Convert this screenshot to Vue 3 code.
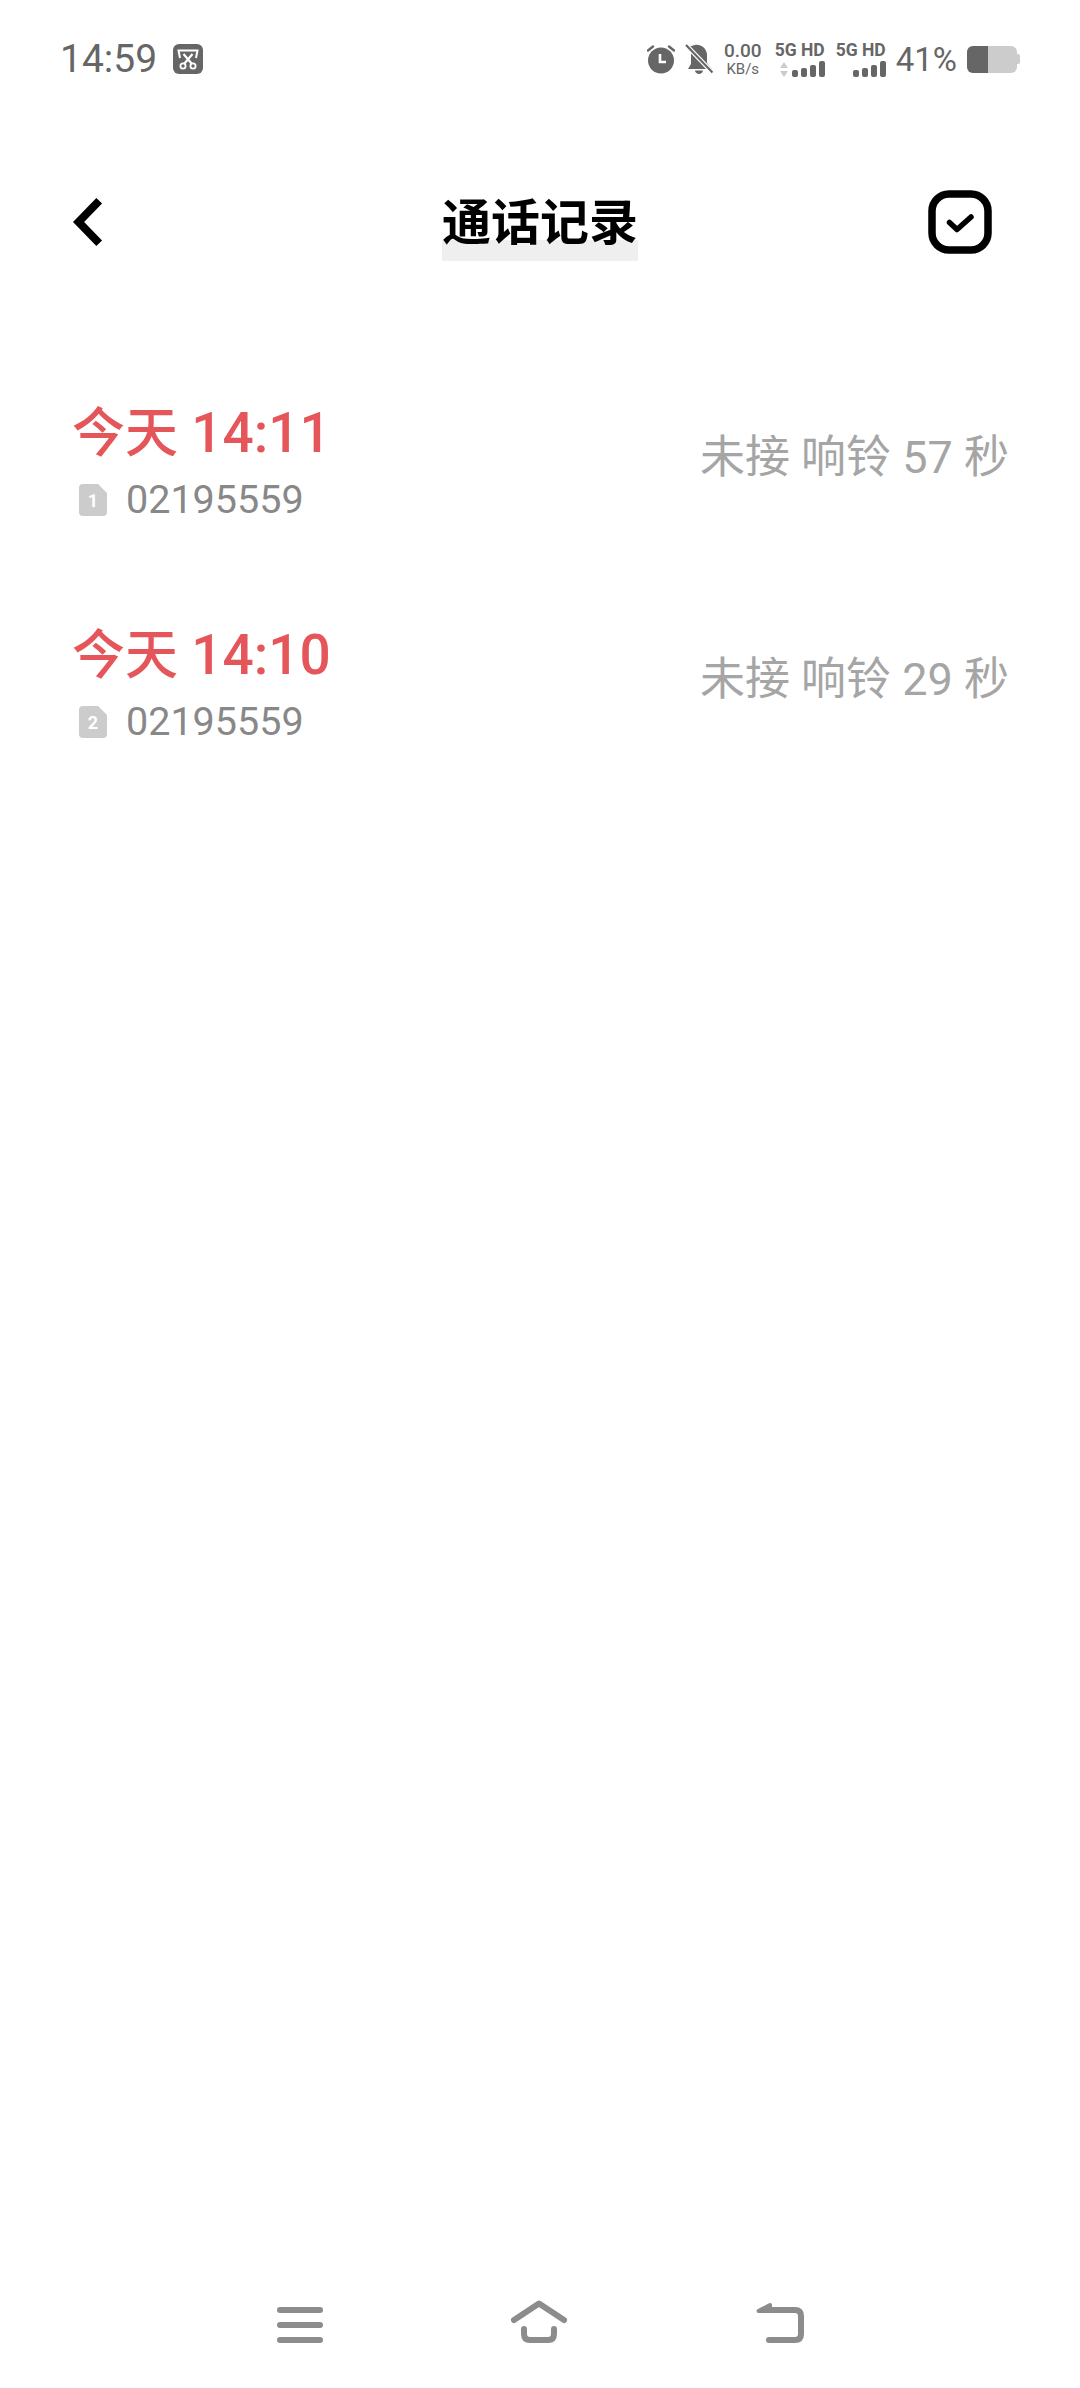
<script setup>
const calls = [
  { day: '今天', time: '14:11', sim: 1, number: '02195559', note: '未接 响铃 57 秒' },
  { day: '今天', time: '14:10', sim: 2, number: '02195559', note: '未接 响铃 29 秒' }
]
</script>

<template>
  <div class="page">
    <div class="status-bar">
      <span class="clock">14:59</span>
      <svg class="shot" width="30" height="30" viewBox="0 0 30 30">
        <rect width="30" height="30" rx="6" fill="#666" />
        <path d="M7 14L5.500 6.500H24.500L23 14" fill="none" stroke="#fff" stroke-width="2" />
        <path d="M10.500 10L19 20M19.500 10L11 20" fill="none" stroke="#fff" stroke-width="2.200" />
        <circle cx="10" cy="22" r="2.600" fill="none" stroke="#fff" stroke-width="1.800" />
        <circle cx="20" cy="22" r="2.600" fill="none" stroke="#fff" stroke-width="1.800" />
      </svg>
      <div class="spacer"></div>
      <svg class="alarm" width="28" height="30" viewBox="0 0 28 30">
        <circle cx="14" cy="16.500" r="13" fill="#666" />
        <path d="M1 6.500L6 2.500M27 6.500L22 2.500" stroke="#666" stroke-width="2.400" stroke-linecap="round" />
        <path d="M13 10V18H19" fill="none" stroke="#fff" stroke-width="2.600" />
      </svg>
      <svg class="bell" width="28" height="30" viewBox="0 0 28 30">
        <path d="M5 2.500L8 1.500C14 -1 21 3 22 10V19L27 25H3L6 20V8Z" fill="#666" />
        <path d="M10 26.500H18C17.500 31 10.500 31 10 26.500Z" fill="#666" />
        <path d="M1 1L27.500 28.500" stroke="#fff" stroke-width="4.500" />
        <path d="M1 1L27.500 28.500" stroke="#666" stroke-width="2.200" />
      </svg>
      <div class="speed">
        <span class="speed-num">0.00</span>
        <span class="speed-unit">KB/s</span>
      </div>
      <div class="signal">
        <span class="net">5G HD</span>
        <div class="bars">
          <svg class="updown" width="8" height="15" viewBox="0 0 8 15">
            <path d="M4 0L8 6H0Z M0 9H8L4 15Z" fill="#ccc" />
          </svg>
          <i class="bar b1"></i><i class="bar b2"></i><i class="bar b3"></i><i class="bar b4"></i>
        </div>
      </div>
      <div class="signal">
        <span class="net">5G HD</span>
        <div class="bars">
          <i class="bar b1"></i><i class="bar b2"></i><i class="bar b3"></i><i class="bar b4"></i>
        </div>
      </div>
      <span class="percent">41%</span>
      <div class="battery">
        <div class="battery-body"><div class="battery-fill"></div></div>
        <div class="battery-nub"></div>
      </div>
    </div>

    <div class="header">
      <svg class="back" width="34" height="50" viewBox="0 0 34 50">
        <path d="M26.200 3.800L5.600 25L26.200 46.200" fill="none" stroke="#000" stroke-width="8" />
      </svg>
      <h1 class="title">通话记录</h1>
      <svg class="select" width="64" height="64" viewBox="0 0 64 64">
        <rect x="4" y="4" width="56" height="56" rx="17" fill="none" stroke="#000" stroke-width="7.500" />
        <path d="M21.500 32.500L29 39.500L43 27" fill="none" stroke="#000" stroke-width="5.500" stroke-linecap="round" stroke-linejoin="round" />
      </svg>
    </div>

    <div class="list">
      <div v-for="call in calls" :key="call.time" class="row">
        <div class="left">
          <div class="time">{{ call.day }} <span class="digits">{{ call.time }}</span></div>
          <div class="sub">
            <div class="sim"><span>{{ call.sim }}</span></div>
            <span class="number">{{ call.number }}</span>
          </div>
        </div>
        <div class="note">{{ call.note }}</div>
      </div>
    </div>

    <div class="nav">
      <svg width="50" height="50" viewBox="0 0 50 50">
        <path d="M5 10H45M5 25H45M5 40H45" stroke="#8c8c8c" stroke-width="6" stroke-linecap="round" />
      </svg>
      <svg width="62" height="50" viewBox="0 0 62 50">
        <path d="M6 20L31 3.500L56 20" fill="none" stroke="#8c8c8c" stroke-width="6" stroke-linecap="round" stroke-linejoin="round" />
        <path d="M16 29V34C16 38 18 40 22 40H40C44 40 46 38 46 34V29" fill="none" stroke="#8c8c8c" stroke-width="6" stroke-linecap="round" />
      </svg>
      <svg width="56" height="50" viewBox="0 0 56 50">
        <path d="M5.500 11L17 5V11Z" fill="#8c8c8c" stroke="#8c8c8c" stroke-width="4" stroke-linejoin="round" />
        <path d="M16 10H42C46 10 48 12 48 16V34C48 38 46 40 42 40H16" fill="none" stroke="#8c8c8c" stroke-width="6" stroke-linecap="round" />
      </svg>
    </div>
  </div>
</template>

<style scoped>
.page {
  min-height: 2388px;
  display: flex;
  flex-direction: column;
  background: #fff;
  font-family: Roboto, "Noto Sans CJK SC", sans-serif;
}

.status-bar {
  display: flex;
  align-items: center;
  height: 78px;
  padding: 20px 60px 0 60px;
  color: #666;
}

.clock {
  font-size: 39px;
  width: 113px;
}

.spacer {
  flex: 1;
}

.bell {
  margin-left: 10px;
}

.speed {
  display: flex;
  flex-direction: column;
  align-items: center;
  margin-left: 9px;
  width: 42px;
  line-height: 1;
}

.speed-num {
  font-size: 19px;
  font-weight: 500;
}

.speed-unit {
  font-size: 15px;
  margin-top: 2px;
}

.signal {
  display: flex;
  flex-direction: column;
  align-items: flex-end;
  width: 49px;
  margin-left: 12px;
}

.net {
  font-size: 17.500px;
  font-weight: 700;
  line-height: 16px;
  white-space: nowrap;
}

.bars {
  display: flex;
  align-items: flex-end;
  gap: 3px;
  height: 18px;
  margin-top: 1px;
}

.updown {
  margin-right: 1px;
}

.bar {
  display: block;
  width: 6px;
  border-radius: 2px;
  background: #666;
}

.b1 { height: 7px; }
.b2 { height: 9px; }
.b3 { height: 12px; }
.b4 { height: 16px; }

.percent {
  font-size: 33px;
  margin-left: 10px;
}

.battery {
  display: flex;
  align-items: center;
  margin-left: 10px;
}

.battery-body {
  width: 50px;
  height: 27px;
  border-radius: 6px;
  background: #ccc;
  overflow: hidden;
}

.battery-fill {
  width: 41%;
  height: 100%;
  background: #666;
}

.battery-nub {
  width: 3px;
  height: 10px;
  border-radius: 0 2px 2px 0;
  background: #ccc;
}

.header {
  display: grid;
  grid-template-columns: 1fr auto 1fr;
  grid-template-rows: 64px;
  align-items: center;
  height: 64px;
  margin-top: 92px;
  padding: 0 80px;
}

.back {
  margin-left: -7px;
}

.title {
  align-self: start;
  margin: 13px 0 0;
  height: 58px;
  font-size: 49px;
  font-weight: 700;
  line-height: 42px;
  color: #000;
  background: linear-gradient(transparent 37px, #efefef 37px);
}

.select {
  justify-self: end;
  margin-right: 8px;
}

.list {
  flex: 1;
  padding: 148px 71px 0 72px;
  display: flex;
  flex-direction: column;
  gap: 104px;
}

.row {
  display: flex;
  align-items: center;
  justify-content: space-between;
}

.time {
  font-size: 53px;
  font-weight: 500;
  line-height: 64px;
  color: #e5565a;
}

.digits {
  font-size: 55px;
  line-height: 1;
}

.sub {
  display: flex;
  align-items: center;
  margin-top: 14px;
  padding-left: 7px;
}

.sim {
  width: 28px;
  height: 32px;
  display: flex;
  align-items: center;
  justify-content: center;
  background: #ccc;
  border-radius: 4px;
  clip-path: polygon(0 0, 68% 0, 100% 28%, 100% 100%, 0 100%);
  color: #fff;
  font-size: 18px;
  font-weight: 700;
}

.number {
  margin-left: 19px;
  font-size: 39.500px;
  line-height: 40px;
  color: #888;
}

.note {
  margin-bottom: 16px;
  font-size: 45px;
  color: #a5a5a5;
}

.nav {
  display: flex;
  justify-content: space-between;
  align-items: flex-start;
  padding: 0 271px 0 275px;
  height: 88px;
  box-sizing: border-box;
}
</style>

<style>
html, body {
  margin: 0;
  background: #fff;
}
</style>
